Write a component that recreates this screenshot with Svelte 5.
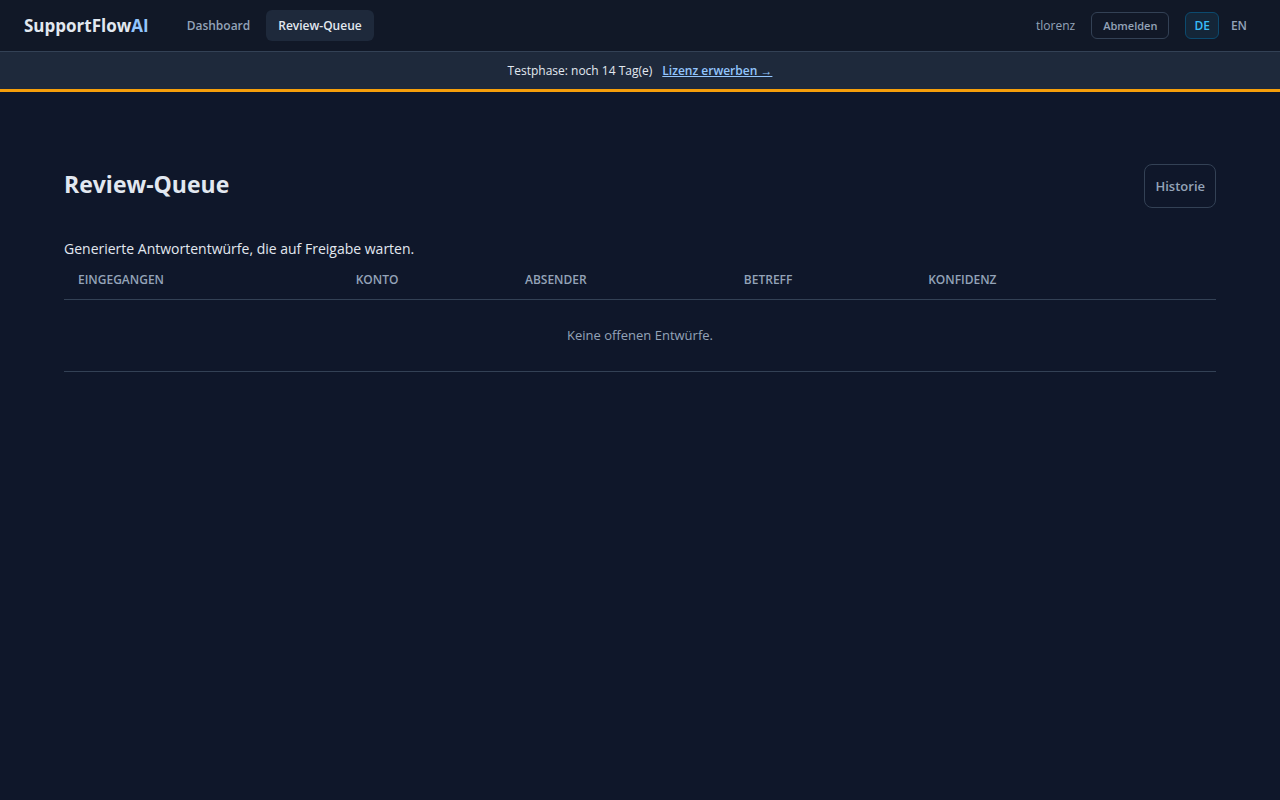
<script>
    let lang = $state('DE');

    const languages = ['DE', 'EN'];
    // column widths in percent
    const columns = [
        { label: 'Eingegangen', width: 24.1 },
        { label: 'Konto', width: 14.7 },
        { label: 'Absender', width: 19 },
        { label: 'Betreff', width: 16 },
        { label: 'Konfidenz', width: 15 },
        { label: '', width: 11.2 }
    ];
</script>

<header class="topbar">
    <a class="brand" href="/">SupportFlow<span>AI</span></a>
    <nav class="nav">
        <a href="/dashboard">Dashboard</a>
        <a href="/review" class="active" aria-current="page">Review-Queue</a>
    </nav>
    <div class="user">
        <span class="username">tlorenz</span>
        <button class="logout" type="button">Abmelden</button>
        <div class="langs">
            {#each languages as code}
                <button type="button" class="lang" class:selected={lang === code} onclick={() => (lang = code)}>{code}</button>
            {/each}
        </div>
    </div>
</header>

<div class="trial">
    <span>Testphase: noch 14 Tag(e)</span>
    <a href="/license">Lizenz erwerben →</a>
</div>

<main class="page">
    <div class="page-head">
        <h1>Review-Queue</h1>
        <a class="history" href="/review/history">Historie</a>
    </div>
    <p class="intro">Generierte Antwortentwürfe, die auf Freigabe warten.</p>
    <table>
        <colgroup>
            {#each columns as column}
                <col style="width: {column.width}%" />
            {/each}
        </colgroup>
        <thead>
            <tr>
                {#each columns as column}
                    <th>{column.label}</th>
                {/each}
            </tr>
        </thead>
        <tbody>
            <tr>
                <td class="empty" colspan={columns.length}>Keine offenen Entwürfe.</td>
            </tr>
        </tbody>
    </table>
</main>

<style>
    :global(body) {
        margin: 0;
        background: #0f172a;
        color: #e2e8f0;
        font-family: "Segoe UI", "Open Sans", "Noto Sans", sans-serif;
        font-size: 14px;
    }

    a {
        text-decoration: none;
    }

    button {
        font-family: inherit;
        cursor: pointer;
    }

    .topbar {
        display: flex;
        align-items: center;
        box-sizing: border-box;
        min-height: 52px;
        padding: 0 24px;
        background: #111827;
        border-bottom: 1px solid #334155;
    }

    .brand {
        font-size: 17px;
        font-weight: 700;
        color: #e2e8f0;
    }

    .brand span {
        color: #93c5fd;
    }

    .nav {
        display: flex;
        gap: 4px;
        margin-left: 26px;
    }

    .nav a {
        padding: 6px 12px;
        border-radius: 6px;
        font-size: 12px;
        font-weight: 600;
        line-height: 19px;
        color: #94a3b8;
    }

    .nav a.active {
        background: #1e293b;
        color: #e2e8f0;
    }

    .user {
        display: flex;
        align-items: center;
        gap: 16px;
        margin-left: auto;
    }

    .username {
        font-size: 12px;
        color: #94a3b8;
    }

    .logout,
    .lang {
        padding: 4px 10px;
        border: 1px solid #334155;
        border-radius: 6px;
        background: transparent;
        color: #94a3b8;
        font-size: 11px;
        font-weight: 600;
        line-height: 17px;
    }

    .logout {
        padding: 4px 11px;
    }

    .langs {
        display: flex;
        gap: 3px;
    }

    .lang {
        padding: 4px 8px;
        border-color: transparent;
        font-size: 12px;
    }

    .lang.selected {
        background: #142638;
        border-color: #0c4a6e;
        color: #38bdf8;
    }

    .trial {
        display: flex;
        justify-content: center;
        gap: 10px;
        padding: 9px 24px;
        background: #1e293b;
        border-bottom: 3px solid #f59e0b;
        font-size: 12px;
        line-height: 19px;
    }

    .trial a {
        color: #93c5fd;
        font-weight: 600;
        text-decoration: underline;
    }

    .page {
        box-sizing: border-box;
        max-width: 1200px;
        margin: 0 auto;
        padding: 72px 24px;
    }

    .page-head {
        display: flex;
        align-items: flex-start;
        justify-content: space-between;
        margin-bottom: 30px;
    }

    h1 {
        margin: 3px 0 0;
        font-size: 23px;
        font-weight: 700;
        line-height: 34px;
    }

    .history {
        padding: 12px 10px;
        border: 1px solid #334155;
        border-radius: 8px;
        color: #94a3b8;
        font-size: 13px;
        font-weight: 600;
        line-height: 18px;
    }

    .intro {
        margin: 0;
        font-size: 14px;
        line-height: 22px;
    }

    table {
        width: 100%;
        table-layout: fixed;
        border-collapse: collapse;
    }

    th {
        padding: 10px 14px;
        border-bottom: 1px solid #334155;
        color: #94a3b8;
        font-size: 12px;
        font-weight: 600;
        line-height: 19px;
        text-align: left;
        text-transform: uppercase;
    }

    td {
        padding: 25px 14px;
        border-bottom: 1px solid #334155;
        font-size: 13px;
        line-height: 21px;
    }

    .empty {
        color: #94a3b8;
        text-align: center;
    }
</style>
